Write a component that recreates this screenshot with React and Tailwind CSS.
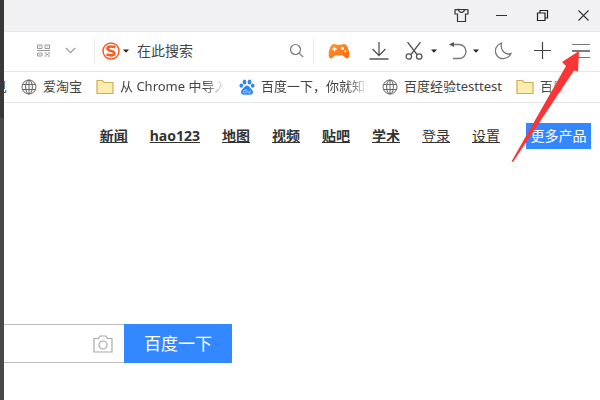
import clsx from "clsx";

function Globe() {
  return (
    <svg className="size-4 shrink-0" viewBox="0 0 16 16" fill="none" stroke="#666" strokeWidth="1">
      <circle cx="8" cy="8" r="7" />
      <ellipse cx="8" cy="8" rx="3.4" ry="7" />
      <path d="M8 1v14M1.6 5.5h12.8M1.6 10.5h12.8" />
    </svg>
  );
}

function Folder() {
  return (
    <svg className="h-4 w-[18px] shrink-0" viewBox="0 0 18 16" fill="#fdeeb0" stroke="#d0ab5c" strokeWidth="1.2">
      <path d="M1 1.500h5.500l1.500 2H17v11H1z" />
    </svg>
  );
}

function Paw() {
  return (
    <svg className="size-4 shrink-0" viewBox="0 0 16 16" fill="#2f86f6">
      <ellipse cx="5.500" cy="3" rx="1.900" ry="2.500" />
      <ellipse cx="10.500" cy="3" rx="1.900" ry="2.500" />
      <ellipse cx="2.300" cy="6.600" rx="1.800" ry="2.200" />
      <ellipse cx="13.700" cy="6.600" rx="1.800" ry="2.200" />
      <path d="M8 6.500c1.500 0 2.300 1.300 3.300 2.400 1.200 1.200 2.700 2 2.700 4.100 0 1.800-1.300 2.700-3 2.700H5c-1.700 0-3-.9-3-2.700 0-2.100 1.500-2.900 2.700-4.100C5.700 7.800 6.500 6.500 8 6.500z" />
      <path d="M7 10v4H5.500a1.300 1.300 0 010-2.600H7M8.800 11.400v1.800q0 .8.800.8h1.500v-2.600" fill="none" stroke="#c5ddff" strokeWidth=".7" />
    </svg>
  );
}

function Caret() {
  return (
    <svg className="h-[4px] w-[6px] shrink-0" viewBox="0 0 6 4" fill="#222">
      <path d="M0 .5h6L3 3.800z" />
    </svg>
  );
}

function TitleBar() {
  return (
    <div className="flex h-8 items-center justify-end gap-[26px] border-b border-[#e8e8ea] bg-[#f1f1f4] pr-[10px]">
      <button aria-label="Skin">
        <svg className="size-[15px]" viewBox="0 0 15 15" fill="none" stroke="#333" strokeWidth="1.200">
          <path d="M4.500 1.500h6l3.500.3V6h-2.500v7.500h-8V6H1V1.800l3.500-.3q.3 2.800 3 2.800t3-2.800" />
        </svg>
      </button>
      <button aria-label="Minimize">
        <svg className="h-[15px] w-[13px]" viewBox="0 0 13 15" stroke="#333" strokeWidth="1">
          <path d="M1 7.500h11" />
        </svg>
      </button>
      <button aria-label="Restore" className="ml-0.5">
        <svg className="size-[13px]" viewBox="0 0 13 13" fill="none" stroke="#222" strokeWidth="1.200">
          <path d="M1.500 4h7.500v7.500H1.500zM4 4V1.500h7.500V9H9" />
        </svg>
      </button>
      <button aria-label="Close" className="ml-0.5">
        <svg className="size-[13px]" viewBox="0 0 13 13" stroke="#333" strokeWidth="1.100">
          <path d="M1.500 1.500l10 10M11.500 1.500l-10 10" />
        </svg>
      </button>
    </div>
  );
}

function Toolbar() {
  return (
    <div className="flex h-[39px] items-center bg-white pr-[10px] pb-0.5">
      <div className="flex flex-1 items-center justify-end gap-[15px] pr-[18px]">
        <button aria-label="QR code">
          <svg className="size-[13px]" viewBox="0 0 13 13" fill="none" stroke="#999" strokeWidth="1">
            <path d="M.5 1h4.500v3.500H.5zM8 1h4.500v3.500H8zM.5 9h4.500v3H.5zM0 6.500h13M7.500 9h2M11 9h2M9 10.500h2.500M7.500 12h2M11 12h2M2.300 2.800h1M9.800 2.800h1M2.300 10.500h1" />
          </svg>
        </button>
        <button aria-label="Address history">
          <svg className="h-[7px] w-[11px]" viewBox="0 0 11 7" fill="none" stroke="#999" strokeWidth="1.100">
            <path d="M.8 1l4.700 4.700L10.200 1" />
          </svg>
        </button>
      </div>
      <div className="flex h-6 w-[220px] items-center border-x border-[#e8e8e8] pr-[9px] pl-[7px]">
        <button className="flex items-center gap-[3px]" aria-label="Search engine">
          <svg className="size-[18px]" viewBox="0 0 18 18" fill="none" stroke="#fb5a22">
            <circle cx="9" cy="9" r="8" strokeWidth="1.500" />
            <path d="M13.500 5.300Q9 3.800 6.300 5 4.200 6.900 7 8.300l4 1.300q2.800 1.500.5 3.200-2.500 1.200-7-.2" strokeWidth="2.600" />
          </svg>
          <Caret />
        </button>
        <input
          aria-label="在此搜索"
          placeholder="在此搜索"
          className="ml-2 min-w-0 flex-1 text-sm text-[#333] outline-none placeholder:text-[#444]"
        />
        <button aria-label="Search">
          <svg className="size-[15px]" viewBox="0 0 15 15" fill="none" stroke="#777" strokeWidth="1.200">
            <circle cx="6.500" cy="6.500" r="5" />
            <path d="M10.200 10.200l4 4" />
          </svg>
        </button>
      </div>
      <div className="flex items-center pl-[14px]">
        <button aria-label="Games">
          <svg className="h-4 w-[22px]" viewBox="0 0 22 16">
            <defs>
              <linearGradient id="pad" x1="0" y1="0" x2="1" y2="1">
                <stop offset="0" stopColor="#ff9a2b" />
                <stop offset="1" stopColor="#fa6414" />
              </linearGradient>
            </defs>
            <path d="M5.500 1C7 .6 8 1.800 11 1.800s4-1.200 5.500-.8C19.500 1.600 21 7 21.300 11.500c.2 3-1 3.800-2.200 3.800-2.200 0-2.700-2.800-5.100-2.800H8c-2.400 0-2.900 2.800-5.100 2.800C1.700 15.300.5 14.500.7 11.500 1 7 2.500 1.600 5.500 1z" fill="url(#pad)" />
            <path d="M6.500 4v4.500M4.300 6.200h4.500" stroke="#fff" strokeWidth="1.300" />
            <circle cx="14.500" cy="5.300" r="1.500" fill="#fff" />
            <circle cx="17.300" cy="8.300" r="1" fill="#fff" />
          </svg>
        </button>
        <button aria-label="Downloads" className="ml-[19px]">
          <svg className="size-5" viewBox="0 0 20 20" fill="none" stroke="#555" strokeWidth="1.300">
            <path d="M10 1v13M3.500 8L10 14.500 16.500 8M.5 18h19" />
          </svg>
        </button>
        <button aria-label="Screenshot" className="ml-4 flex items-center gap-2">
          <svg className="size-[18px]" viewBox="0 0 18 18" fill="none" stroke="#555" strokeWidth="1.300">
            <path d="M2.500 0L12 12.500M15.500 0L6 12.500" />
            <circle cx="3.800" cy="14.500" r="2.700" />
            <circle cx="14.200" cy="14.500" r="2.700" />
          </svg>
          <Caret />
        </button>
        <button aria-label="Undo close" className="ml-3 flex items-center gap-[6px]">
          <svg className="size-[18px]" viewBox="0 0 18 18" fill="none" stroke="#777" strokeWidth="1.400">
            <path d="M2 2.500h8a7 7 0 010 14H4" />
            <path d="M0 2.500L5 0v5z" fill="#555" stroke="none" />
          </svg>
          <Caret />
        </button>
        <button aria-label="Night mode" className="ml-4">
          <svg className="size-[18px]" viewBox="0 0 18 18" fill="none" stroke="#777" strokeWidth="1.300">
            <path d="M6.500 1C1 3-1 8.500 1.500 12.800c3 5.300 11.500 5.300 14.500-1.300C10 13.500 5 8.500 6.500 1z" />
          </svg>
        </button>
        <button aria-label="New tab" className="ml-[21px]">
          <svg className="size-[17px]" viewBox="0 0 17 17" stroke="#444" strokeWidth="1.200">
            <path d="M8.500 0v17M0 8.500h17" />
          </svg>
        </button>
        <button aria-label="Menu" className="ml-[21px]">
          <svg className="h-4 w-[18px]" viewBox="0 0 18 16" strokeWidth="1.200">
            <path d="M0 1.500h18M0 14.500h18" stroke="#777" />
            <path d="M0 8h18" stroke="#222" />
          </svg>
        </button>
      </div>
    </div>
  );
}

const bookmarks = [
  { label: "爱淘宝", icon: Globe },
  { label: "从 Chrome 中导入", icon: Folder, fade: "w-[105px]" },
  { label: "百度一下，你就知道", icon: Paw, fade: "w-[107px]" },
  { label: "百度经验testtest", icon: Globe },
  { label: "百度", icon: Folder, fade: "w-[26px]" },
];

function Bookmarks() {
  return (
    <div className="flex h-8 items-center gap-[14px] overflow-hidden border-y border-[#e6e6e6] bg-white text-[13px] whitespace-nowrap text-[#444]">
      <a href="#" className="flex w-[3px] shrink-0 justify-end overflow-hidden">
        <span>见</span>
      </a>
      {bookmarks.map(({ label, icon: Icon, fade }) => (
        <a key={label} href="#" className="flex shrink-0 items-center gap-[6px]">
          <Icon />
          <span
            className={clsx(
              fade && "overflow-hidden [mask-image:linear-gradient(to_left,transparent,black_20px)]",
              fade
            )}
          >
            {label}
          </span>
        </a>
      ))}
    </div>
  );
}

const links = ["新闻", "hao123", "地图", "视频", "贴吧", "学术"];

function Nav() {
  return (
    <nav className="flex items-center justify-end gap-[22px] pt-5 pr-[9px] text-sm whitespace-nowrap text-[#333]">
      {links.map((link) => (
        <a key={link} href="#" className="font-bold underline">
          {link}
        </a>
      ))}
      <a href="#" className="underline">登录</a>
      <a href="#" className="underline">设置</a>
      <button className="ml-1 h-[26px] w-[65px] bg-[#3388ff] text-white">更多产品</button>
    </nav>
  );
}

// red pointer to the menu button
function Pointer() {
  return (
    <svg className="pointer-events-none absolute top-[50px] right-[18px] h-[114px] w-[72px]" viewBox="0 0 72 114">
      <path d="M69 1L52 12l4 4L1.500 111.500l1.500.5L64 20.500l4 1z" fill="#fa3535" />
    </svg>
  );
}

export default function App() {
  return (
    <div className="relative flex min-h-screen bg-white font-['Noto_Sans','Noto_Sans_CJK_SC',sans-serif]">
      {/* edge of the window behind */}
      <div className="flex w-1 shrink-0 flex-col bg-[#4a4846]">
        <div className="h-[118px] bg-[#393836]" />
      </div>
      <div className="min-w-0 flex-1">
        <TitleBar />
        <Toolbar />
        <Bookmarks />
        <Nav />
        <form className="mt-[175px] flex h-[39px]" onSubmit={(e) => e.preventDefault()}>
          <div className="flex w-[120px] items-center border-y border-[#bbb] pr-[11px]">
            <input aria-label="搜索" className="min-w-0 flex-1 outline-none" />
            <button type="button" aria-label="Search by image">
              <svg className="h-[18px] w-5" viewBox="0 0 20 18" fill="none" stroke="#aaa" strokeWidth="1.200">
                <path d="M1 3.500h4.500l1.500-2.500h6l1.500 2.500H19v13.500H1z" />
                <circle cx="10" cy="10" r="4" />
              </svg>
            </button>
          </div>
          <button className="w-[108px] bg-[#3388ff] text-[17px] text-white">百度一下</button>
        </form>
      </div>
      <Pointer />
    </div>
  );
}
